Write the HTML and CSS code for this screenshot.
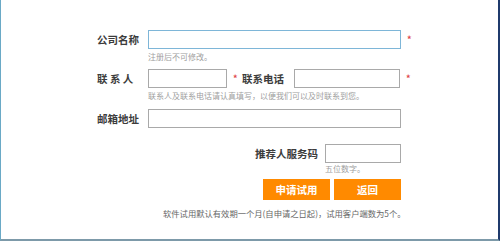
FILE: index.html
```html
<!DOCTYPE html>
<html lang="zh-CN">
<head>
<meta charset="utf-8">
<title>申请试用</title>
<link rel="stylesheet" href="styles.css">
</head>
<body>
<div class="frame">
  <form class="form">
    <div class="row r1">
      <label class="label">公司名称</label>
      <div class="field">
        <input class="input input-focus w-full" type="text">
        <div class="hint">注册后不可修改。</div>
      </div>
      <span class="star">*</span>
    </div>

    <div class="row r2">
      <label class="label">联 系 人</label>
      <input class="input w-short" type="text">
      <span class="star">*</span>
      <label class="label label-phone">联系电话</label>
      <input class="input w-phone" type="text">
      <span class="star">*</span>
    </div>
    <div class="hint hint-indent">联系人及联系电话请认真填写，以便我们可以及时联系到您。</div>

    <div class="row r3">
      <label class="label">邮箱地址</label>
      <input class="input w-full" type="text">
    </div>

    <div class="row r4">
      <label class="label label-ref">推荐人服务码</label>
      <div class="field">
        <input class="input w-code" type="text">
        <div class="hint hint-tight">五位数字。</div>
      </div>
    </div>

    <div class="actions">
      <button type="button" class="btn">申请试用</button>
      <button type="button" class="btn">返回</button>
    </div>

    <p class="note">软件试用默认有效期一个月(自申请之日起)，试用客户端数为5个。</p>
  </form>
</div>
</body>
</html>
```

FILE: styles.css
```css
html, body {
  margin: 0;
  padding: 0;
  background: #ffffff;
}

body {
  font-family: "Noto Sans CJK SC", "Noto Sans", "Liberation Sans", sans-serif;
  color: #333333;
}

.frame {
  box-sizing: border-box;
  width: 500px;
  height: 241px;
  border-left: 1px solid #6aa9c6;
  border-right: 2px solid #1f3a6c;
  border-bottom: 2px solid #7d9aa9;
  padding: 30px 0 0 96px;
}

.form {
  margin: 0;
}

.row {
  display: flex;
  align-items: flex-start;
}

.label {
  width: 51px;
  flex: none;
  font-size: 10.5px;
  line-height: 19px;
  font-weight: 700;
  color: #3c3c3c;
  white-space: pre;
}

.input {
  box-sizing: border-box;
  height: 19px;
  margin: 0;
  padding: 0 3px;
  border: 1px solid #a9a9a9;
  background: #ffffff;
  outline: none;
  flex: none;
  display: block;
}

.input-focus {
  border-color: #7eb6d8;
}

.w-full { width: 253px; }
.w-short { width: 79px; }
.w-phone { width: 106px; }
.w-code { width: 76px; }

.star {
  color: #e0474c;
  font-size: 9px;
  font-weight: 700;
  line-height: 19px;
  margin-left: 6px;
  width: 5px;
  flex: none;
}

.label-phone {
  width: 52px;
  margin-left: 4px;
}

.hint {
  font-size: 8px;
  line-height: 12px;
  margin-top: 2px;
  color: #a0a0a0;
  white-space: nowrap;
}

.hint-indent {
  margin-left: 51px;
}

.hint-tight {
  margin-top: 0;
}

.r2 { margin-top: 6px; }
.r3 { margin-top: 7px; }

.r4 {
  margin-top: 16px;
  padding-left: 158px;
}

.label-ref {
  width: 70px;
}

.actions {
  display: flex;
  gap: 4px;
  margin-top: 4px;
  padding-left: 166px;
}

.btn {
  width: 67px;
  height: 21px;
  margin: 0;
  padding: 0;
  border: none;
  background: #ff8a00;
  color: #ffffff;
  font-family: inherit;
  font-size: 10.5px;
  font-weight: 700;
  line-height: 21px;
  cursor: pointer;
}

.note {
  margin: 7px 0 0 66px;
  font-size: 8.3px;
  line-height: 12px;
  color: #666666;
  white-space: nowrap;
}
```
